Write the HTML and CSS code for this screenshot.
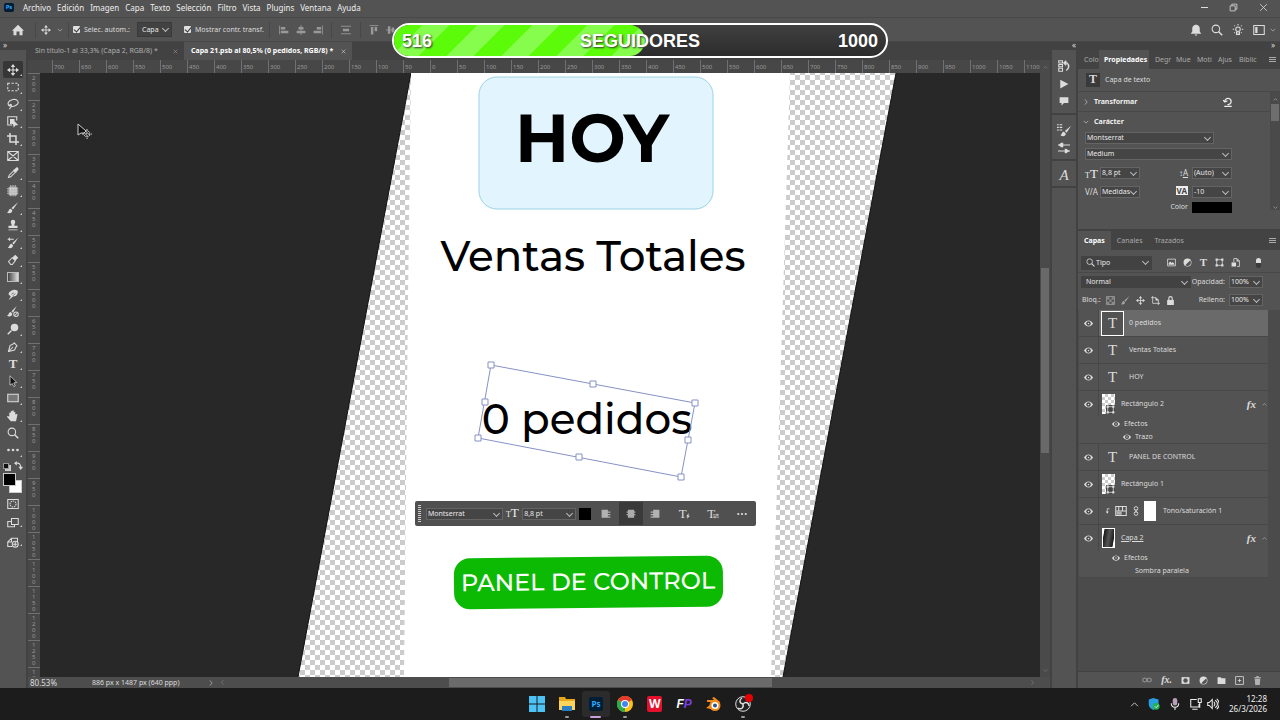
FILE: index.html
```
<!DOCTYPE html>
<html lang="es">
<head>
  <meta charset="UTF-8">
  <meta name="viewport" content="width=device-width, initial-scale=1.0">
  <title>Capa 21.psb</title>
  <link rel="stylesheet" href="styles.css">
</head>
<body>
  <!-- Iconos -->
  <svg class="defs" aria-hidden="true">
    <symbol id="down" viewBox="0 0 16 16"><path d="M2 5l6 6 6-6" class="l"/></symbol>
    <symbol id="up" viewBox="0 0 16 16"><path d="M2 11l6-6 6 6" class="l"/></symbol>
    <symbol id="right" viewBox="0 0 16 16"><path d="M5 1l6 7-6 7" class="l"/></symbol>
    <symbol id="left" viewBox="0 0 16 16"><path d="M11 1L5 8l6 7" class="l"/></symbol>
    <symbol id="close" viewBox="0 0 16 16"><path d="M2 2l12 12M14 2L2 14" class="l"/></symbol>
    <symbol id="home" viewBox="0 0 16 16"><path d="M8 1L0 9h2v6h4v-5h4v5h4V9h2z" class="f"/></symbol>
    <symbol id="move" viewBox="0 0 16 16"><path d="M8 2v12M2 8h12" class="l"/><path d="M8 0l3 4H5zM8 16l3-4H5zM0 8l4-3v6zM16 8l-4-3v6z" class="f"/></symbol>
    <symbol id="marquee" viewBox="0 0 16 16"><path d="M1 3h14v10H1z" class="l" stroke-dasharray="3 2"/></symbol>
    <symbol id="lasso" viewBox="0 0 16 16"><path d="M4 11C-1 8 2 3 8 2s9 4 5 7-8 3-9 1 2-2 2 0-1 3-3 5" class="l"/></symbol>
    <symbol id="object" viewBox="0 0 16 16"><path d="M7 12H1V1h12v5" class="l"/><path d="M4 4h6v3l5 5-4 .5-2 3-1-5H4z" class="f"/></symbol>
    <symbol id="crop" viewBox="0 0 16 16"><path d="M4 0v12h12M0 4h12v12" class="l t2"/></symbol>
    <symbol id="frame" viewBox="0 0 16 16"><path d="M1 2h14v12H1zM1 2l14 12M15 2L1 14" class="l"/></symbol>
    <symbol id="dropper" viewBox="0 0 16 16"><path d="M2 14l1-3 6-6 2 2-6 6z" class="l"/><path d="M8 4l2-1 2-2c2-2 4 1 3 3l-2 2-1 2z" class="f"/></symbol>
    <symbol id="patch" viewBox="0 0 16 16"><rect x="2" y="2" width="12" height="12" rx="2" class="g"/><path d="M5 0v16M8 0v16M11 0v16M0 5h16M0 8h16M0 11h16" class="l" stroke-dasharray="1 1"/></symbol>
    <symbol id="brush" viewBox="0 0 16 16"><path d="M15 0L6 8l2 2zM5 9c-3 0-2 4-5 5 3 2 7 1 7-3z" class="f"/></symbol>
    <symbol id="stamp" viewBox="0 0 16 16"><path d="M6 9c1-2-1-3-1-5a3 3 0 0 1 6 0c0 2-2 3-1 5h4v3H2V9zM2 14h12v1H2z" class="f"/></symbol>
    <symbol id="history" viewBox="0 0 16 16"><path d="M15 1L7 8l2 2zM6 9c-3 0-2 4-5 5 3 2 7 1 7-3z" class="f"/><path d="M9 3H2l2-2M2 3l2 2" class="l"/></symbol>
    <symbol id="eraser" viewBox="0 0 16 16"><path d="M7 5l4-4 4 4-4 4z" class="f"/><path d="M7 5l-5 5 3 4h2l4-5z" class="l"/></symbol>
    <symbol id="smudge" viewBox="0 0 16 16"><path d="M2 15l3-5-3-3c0-3 5-6 8-6l4 1c1 3 0 8-6 8z" class="f"/><path d="M6 7l3-2M8 9l3-3" class="d"/></symbol>
    <symbol id="mixer" viewBox="0 0 16 16"><path d="M13 0L6 7l2 2zM5 8c-3 0-2 4-5 5 3 2 7 1 7-3z" class="f"/><circle cx="12" cy="11" r="3" class="l"/><path d="M10 13l4-4" class="l"/></symbol>
    <symbol id="dodge" viewBox="0 0 16 16"><circle cx="10" cy="6" r="5" class="f"/><path d="M6 10l-5 5" class="l t2"/></symbol>
    <symbol id="pen" viewBox="0 0 16 16"><path d="M2 14l2-8 6-3 3 3-3 6zM2 14l6-6M9 2l5 5" class="l"/></symbol>
    <symbol id="arrow" viewBox="0 0 16 16"><path d="M4 1l9 9-4 .5 2 4-2 1-2-4-3 2z" fill="#111" stroke="#ddd"/></symbol>
    <symbol id="rect" viewBox="0 0 16 16"><path d="M1 3h14v10H1z" fill="#777"/><path d="M1 3h14v10H1z" class="l"/></symbol>
    <symbol id="hand" viewBox="0 0 16 16"><path d="M5 15L0 9c0-1 1-2 3 0V4c0-1 2-1 2 0V2c0-1 2-1 2 0V1c0-1 2-1 2 0v2c1-1 2-1 2 0v3c1-1 3-1 3 0l-2 9z" class="f"/></symbol>
    <symbol id="zoom" viewBox="0 0 16 16"><circle cx="6.500" cy="6.500" r="5" class="l"/><path d="M10 10l5 5" class="l t2"/></symbol>
    <symbol id="dots" viewBox="0 0 16 16"><circle cx="2" cy="8" r="1.800" class="f"/><circle cx="8" cy="8" r="1.800" class="f"/><circle cx="14" cy="8" r="1.800" class="f"/></symbol>
    <symbol id="swap" viewBox="0 0 16 16"><path d="M4 4c6-1 8 2 8 8" class="l t2"/><path d="M5 0v8L0 4zM8 10h8l-4 6z" class="f"/></symbol>
    <symbol id="mask" viewBox="0 0 16 16"><path d="M1 2h14v12H1z" class="l"/><circle cx="8" cy="8" r="4" class="l" stroke-dasharray="2 1"/></symbol>
    <symbol id="screens" viewBox="0 0 16 16"><path d="M6 2h9v8H6z" class="l"/><path d="M6 6H1v7h9v-3" class="l"/></symbol>
    <symbol id="cloud" viewBox="0 0 16 16"><path d="M7 14H1V8l5-5h8v5M1 8h5V3" class="l"/><circle cx="11" cy="11" r="4" class="l"/><path d="M8 11h6M11 8v6" class="l"/></symbol>
    <symbol id="al" viewBox="0 0 16 16"><path d="M1 1v14" class="l"/><path d="M3 3h7v4H3zM3 9h12v4H3z" class="f"/></symbol>
    <symbol id="ac" viewBox="0 0 16 16"><path d="M8 0v16" class="l"/><path d="M4 3h8v4H4zM1 9h14v4H1z" class="f"/></symbol>
    <symbol id="ar" viewBox="0 0 16 16"><path d="M15 1v14" class="l"/><path d="M6 3h7v4H6zM1 9h12v4H1z" class="f"/></symbol>
    <symbol id="dist" viewBox="0 0 16 16"><path d="M0 2h16M0 14h16" class="l"/><path d="M3 6h10v4H3z" class="f"/></symbol>
    <symbol id="at" viewBox="0 0 16 16"><path d="M1 1h14" class="l"/><path d="M3 3h4v12H3zM9 3h4v7H9z" class="f"/></symbol>
    <symbol id="am" viewBox="0 0 16 16"><path d="M0 8h16" class="l"/><path d="M3 2h4v12H3zM9 4h4v8H9z" class="f"/></symbol>
    <symbol id="bell" viewBox="0 0 16 16"><path d="M1 13l2-3V6c0-3 2-4 4-5h2c2 1 4 2 4 5v4l2 3zM6 14h4l-2 2z" class="f"/></symbol>
    <symbol id="bulb" viewBox="0 0 16 16"><circle cx="8" cy="7" r="3" class="l"/><path d="M6 10v4h4v-4M6 12h4M8 0v2M1 7h2M13 7h2M3 2l1 1M13 2l-1 1M3 12l1-1M13 12l-1-1" class="l"/></symbol>
    <symbol id="work" viewBox="0 0 16 16"><path d="M1 2h14v12H1z" class="l"/><path d="M3 4h3v8H3z" class="f"/></symbol>
    <symbol id="restore" viewBox="0 0 16 16"><path d="M2 5h9v9H2zM5 5V2h9v9h-3" class="l"/></symbol>
    <symbol id="tl" viewBox="0 0 16 16"><path d="M1 1h10v3h4v2h-4v2h4v2h-4v2h4v2H1z" class="g"/></symbol>
    <symbol id="tc" viewBox="0 0 16 16"><path d="M3 1h10v3h2v2h-2v2h2v2h-2v4H3v-4H1V8h2V6H1V4h2z" class="g"/></symbol>
    <symbol id="tr" viewBox="0 0 16 16"><path d="M15 1H5v3H1v2h4v2H1v2h4v2H1v2h14z" class="g"/></symbol>
    <symbol id="hist2" viewBox="0 0 16 16"><path d="M1 1h5v3H1zM1 6h5v3H1zM1 11h5v4H1z" class="l"/><path d="M9 4h3c4 3 2 8-1 10M11 1L8 4l3 3" class="l t2"/></symbol>
    <symbol id="play" viewBox="0 0 16 16"><path d="M2 1l13 7-13 7z" class="f"/></symbol>
    <symbol id="note" viewBox="0 0 16 16"><path d="M1 2h14v9H8l-4 4v-4H1z" class="f"/></symbol>
    <symbol id="brushes" viewBox="0 0 16 16"><path d="M16 3l-7 6 2 2zM8 10c-3 0-2 3-4 4 3 2 6 1 6-2z" class="f"/><path d="M0 2h2m1 0h3M0 5h2m1 0h3M0 8h2m1 0h3" class="l"/></symbol>
    <symbol id="sliders" viewBox="0 0 16 16"><path d="M0 4h16M0 12h16" class="l"/><path d="M1 4l3-3h3v6H4zM15 12l-4-3H9v6h2z" class="f"/></symbol>
    <symbol id="reset" viewBox="0 0 16 16"><path d="M3 7a5 5 0 1 1 4 5M0 5l3 3 4-2M2 15h12" class="l t2"/></symbol>
    <symbol id="image" viewBox="0 0 16 16"><path d="M1 2h14v12H1z" class="l"/><path d="M3 12V9l3-3 2 3 2-2 3 3v2z" class="f"/></symbol>
    <symbol id="adjust" viewBox="0 0 16 16"><circle cx="8" cy="8" r="7" class="f"/><path d="M13 4L4 13c5 3 10 0 10-5z" fill="#535353"/></symbol>
    <symbol id="shape" viewBox="0 0 16 16"><path d="M3 3h10v10H3z" class="l"/><path d="M1 1h4v4H1zM11 1h4v4h-4zM1 11h4v4H1zM11 11h4v4h-4z" class="f"/></symbol>
    <symbol id="smart" viewBox="0 0 16 16"><path d="M5 8V1h6l4 4v10h-4" class="l"/><path d="M1 8h8v7H1zM10 1v5h5z" class="f"/></symbol>
    <symbol id="grid" viewBox="0 0 16 16"><path d="M1 1h14v14H1z" class="l"/><path d="M2 2h4v4H2zM10 2h4v4h-4zM6 6h4v4H6zM2 10h4v4H2zM10 10h4v4h-4z" class="g"/></symbol>
    <symbol id="artb" viewBox="0 0 16 16"><path d="M3 0v13h13M0 3h9l4 4v9" class="l"/><path d="M8 2v6h6z" class="f"/></symbol>
    <symbol id="lock" viewBox="0 0 16 16"><path d="M2 7h12v9H2z" class="f"/><path d="M5 7V4a3 3 0 0 1 6 0v3" class="l t2"/></symbol>
    <symbol id="eye" viewBox="0 0 16 16"><path d="M0 8c4-7 12-7 16 0-4 7-12 7-16 0z" class="f"/><circle cx="8" cy="8" r="4" fill="#444"/><circle cx="8" cy="8" r="1.500" class="f"/></symbol>
    <symbol id="clip" viewBox="0 0 16 16"><path d="M12 2H6v9" class="l t2"/><path d="M2 9h8l-4 6z" class="f"/></symbol>
    <symbol id="hue" viewBox="0 0 16 16"><path d="M1 2h14v12H1zM1 8h14M5 2v6M10 2v6" class="l"/><path d="M2 9h7v4H2z" class="g"/></symbol>
    <symbol id="chain" viewBox="0 0 16 16"><rect x="5" y="1" width="6" height="6" rx="3" class="l"/><rect x="5" y="9" width="6" height="6" rx="3" class="l"/><path d="M8 5v6" class="l"/></symbol>
    <symbol id="link" viewBox="0 0 16 16"><rect x="1" y="5" width="7" height="6" rx="3" class="l"/><rect x="8" y="5" width="7" height="6" rx="3" class="l"/></symbol>
    <symbol id="addmask" viewBox="0 0 16 16"><path d="M1 2h14v12H1z" class="f"/><circle cx="8" cy="8" r="4" fill="#535353"/></symbol>
    <symbol id="folder" viewBox="0 0 16 16"><path d="M1 2h6l1 2h7v10H1z" class="f"/></symbol>
    <symbol id="plus" viewBox="0 0 16 16"><path d="M1 1h14v14H1zM8 5v6M5 8h6" class="l"/></symbol>
    <symbol id="trash" viewBox="0 0 16 16"><path d="M3 5h10l-1 11H4zM2 2h4V0h4v2h4v2H2z" class="g"/></symbol>
    <symbol id="bolt" viewBox="0 0 16 16"><path d="M10 0L3 9h4l-2 7 8-9H9z" class="f"/></symbol>
    <symbol id="tune" viewBox="0 0 16 16"><path d="M0 5h16M0 11h16M11 2v6M5 8v6" class="l t2"/></symbol>
  </svg>

  <header class="menubar">
    <span class="ps-logo">Ps</span>
    <nav>
      <button>Archivo</button><button>Edición</button><button>Imagen</button><button>Capa</button><button>Texto</button><button>Selección</button><button>Filtro</button><button>Vista</button><button>Plugins</button><button>Ventana</button><button>Ayuda</button>
    </nav>
    <div class="window-buttons">
      <button aria-label="Minimizar"><span class="minus"></span></button>
      <button aria-label="Restaurar"><svg class="i8"><use href="#restore"/></svg></button>
      <button aria-label="Cerrar"><svg class="i8"><use href="#close"/></svg></button>
    </div>
  </header>

  <div class="options">
    <button class="home" aria-label="Inicio"><svg class="i12"><use href="#home"/></svg></button>
    <button class="current" aria-label="Mover"><svg class="i10"><use href="#move"/></svg><svg class="i6"><use href="#down"/></svg></button>
    <label class="check first"><input type="checkbox" checked>Selec. autom.:</label>
    <span class="field capa"><select aria-label="Selección automática"><option>Capa</option></select></span>
    <label class="check second"><input type="checkbox" checked>Mostrar contr. transf.</label>
    <div class="aligns">
      <svg class="i10"><use href="#al"/></svg><svg class="i10"><use href="#ac"/></svg><svg class="i10"><use href="#ar"/></svg>
    </div>
    <div class="aligns one"><svg class="i10"><use href="#dist"/></svg></div>
    <div class="aligns last"><svg class="i10"><use href="#at"/></svg><svg class="i10"><use href="#am"/></svg></div>
    <div class="right-tools">
      <button aria-label="Avisos"><svg class="i12"><use href="#bell"/></svg></button>
      <button aria-label="Buscar"><svg class="i12"><use href="#zoom"/></svg></button>
      <button aria-label="Sugerencias"><svg class="i12"><use href="#bulb"/></svg></button>
      <button class="space" aria-label="Espacio de trabajo"><svg class="i12"><use href="#work"/></svg><svg class="i6"><use href="#down"/></svg></button>
    </div>
  </div>

  <main>
    <aside class="toolbar">
      <div class="strip">»</div>
      <div class="tools">
        <button class="on" aria-label="Mover"><svg><use href="#move"/></svg></button>
        <button aria-label="Marco"><svg><use href="#marquee"/></svg></button>
        <button aria-label="Lazo"><svg><use href="#lasso"/></svg></button>
        <button aria-label="Selección de objetos"><svg><use href="#object"/></svg></button>
        <button aria-label="Recortar"><svg><use href="#crop"/></svg></button>
        <button class="solo" aria-label="Marco de imagen"><svg><use href="#frame"/></svg></button>
        <button aria-label="Cuentagotas"><svg><use href="#dropper"/></svg></button>
        <button aria-label="Parche"><svg><use href="#patch"/></svg></button>
        <button aria-label="Pincel"><svg><use href="#brush"/></svg></button>
        <button aria-label="Tampón"><svg><use href="#stamp"/></svg></button>
        <button aria-label="Pincel de historia"><svg><use href="#history"/></svg></button>
        <button aria-label="Borrador"><svg><use href="#eraser"/></svg></button>
        <button aria-label="Degradado"><span class="gradient"></span></button>
        <button aria-label="Dedo"><svg><use href="#smudge"/></svg></button>
        <button class="solo" aria-label="Pincel mezclador"><svg><use href="#mixer"/></svg></button>
        <button aria-label="Sobreexponer"><svg><use href="#dodge"/></svg></button>
        <button aria-label="Pluma"><svg><use href="#pen"/></svg></button>
        <button aria-label="Texto"><span class="t">T</span></button>
        <button aria-label="Selección de trazado"><svg><use href="#arrow"/></svg></button>
        <button aria-label="Rectángulo"><svg><use href="#rect"/></svg></button>
        <button aria-label="Mano"><svg><use href="#hand"/></svg></button>
        <button class="solo" aria-label="Zoom"><svg><use href="#zoom"/></svg></button>
        <button aria-label="Más"><svg><use href="#dots"/></svg></button>
      </div>
      <div class="mini"><span class="default-colors"></span><svg class="i8"><use href="#swap"/></svg></div>
      <div class="colors"><span class="bg"></span><span class="fg"></span></div>
      <div class="bottom-tools">
        <button class="solo" aria-label="Máscara rápida"><svg><use href="#mask"/></svg></button>
        <button aria-label="Modo de pantalla"><svg><use href="#screens"/></svg></button>
        <button aria-label="Compartir"><svg><use href="#cloud"/></svg></button>
      </div>
    </aside>

    <section class="document">
      <div class="doc-tabs">
        <button class="first">Sin título-1 al 33,3% (Capa 2, RGB/8) *<svg class="i5"><use href="#close"/></svg></button>
        <button class="active">Capa 21.psb al 80,5% (0 pedidos, RGB/8) *<svg class="i5"><use href="#close"/></svg></button>
      </div>
      <div class="work">
        <div class="ruler-h" id="rulerH"></div>
        <div class="ruler-v" id="rulerV"></div>
        <div class="canvas">
          <svg class="art" viewBox="40 73 1000 604" preserveAspectRatio="xMidYMid slice">
            <defs>
              <pattern id="checker" width="10" height="10" patternUnits="userSpaceOnUse">
                <rect width="10" height="10" fill="#fff"/><path d="M0 0h5v5H0zM5 5h5v5H5z" fill="#ccc"/>
              </pattern>
            </defs>
            <path d="M411 73H896L783 677H298z" fill="url(#checker)"/>
            <path d="M411 73L298 677M896 73L783 677" stroke="#111"/>
            <path d="M411 73H790L771 677H404L408 300z" fill="#fff"/>
            <rect x="479" y="77" width="234" height="132" rx="18" fill="#e2f4fd" stroke="#9bd4e4"/>
            <text x="592" y="162" class="hoy">HOY</text>
            <text x="593" y="271" class="ventas">Ventas Totales</text>
            <text x="587" y="434" class="pedidos">0 pedidos</text>
            <g class="box">
              <path d="M491 365L695 403L681 477L478 438z"/>
              <path d="M488 362h6v6h-6zM692 400h6v6h-6zM678 474h6v6h-6zM475 435h6v6h-6zM590 381h6v6h-6zM685 437h6v6h-6zM576 454h6v6h-6zM482 399h6v6h-6z" fill="#fff"/>
            </g>
            <g transform="rotate(-0.6 588 582)">
              <rect x="454" y="557" width="269" height="51" rx="16" fill="#0cba04"/>
              <text x="588" y="590" class="panel-text">PANEL DE CONTROL</text>
            </g>
            <path d="M78 124v11l3-2 3 0 2-2z" fill="#111" stroke="#ccc"/>
            <path d="M87 129v10M82 134h10" stroke="#ccc" stroke-dasharray="2 1"/>
            <circle cx="87" cy="134" r="3" fill="none" stroke="#ccc" stroke-dasharray="2 1"/>
          </svg>
          <div class="context-bar">
            <span class="grip"></span>
            <span class="field font"><select aria-label="Fuente"><option>Montserrat</option></select></span>
            <span class="tt"><small>T</small>T</span>
            <span class="field size"><input type="text" value="8,8 pt" aria-label="Tamaño"></span>
            <span class="swatch"></span>
            <button aria-label="Izquierda"><svg class="i10"><use href="#tl"/></svg></button>
            <button class="on" aria-label="Centro"><svg class="i10"><use href="#tc"/></svg></button>
            <button aria-label="Derecha"><svg class="i10"><use href="#tr"/></svg></button>
            <button class="wide" aria-label="Texto dinámico"><span class="t">T</span><svg class="i6"><use href="#bolt"/></svg></button>
            <button class="wide" aria-label="Opciones de texto"><span class="t">T</span><svg class="i6"><use href="#tune"/></svg></button>
            <button class="wide" aria-label="Más opciones"><svg class="i10"><use href="#dots"/></svg></button>
          </div>
        </div>
        <div class="scroll-v"><svg class="i5"><use href="#up"/></svg><span class="thumb"></span><svg class="i5"><use href="#down"/></svg></div>
      </div>
      <footer class="status">
        <span class="zoom">80.53%</span>
        <span class="dims">886 px x 1487 px (640 ppp)</span>
        <svg class="i6"><use href="#right"/></svg>
        <div class="scroll-h"><svg class="i5"><use href="#left"/></svg><span class="thumb"></span><svg class="i5"><use href="#right"/></svg></div>
      </footer>
    </section>

    <aside class="dock">
      <div class="strip">«</div>
      <div class="group three">
        <button aria-label="Historia"><svg class="i12"><use href="#hist2"/></svg></button>
        <button aria-label="Acciones"><svg class="i10"><use href="#play"/></svg></button>
        <button aria-label="Comentarios"><svg class="i10"><use href="#note"/></svg></button>
      </div>
      <div class="group two">
        <button aria-label="Pinceles"><svg class="i14"><use href="#brushes"/></svg></button>
        <button aria-label="Ajustes de pincel"><svg class="i12"><use href="#sliders"/></svg></button>
      </div>
      <div class="group"><button aria-label="Glifos"><span class="glyph-a">A</span></button></div>
      <div class="rest"></div>
    </aside>

    <aside class="panels">
      <div class="strip">»</div>
      <section class="properties">
        <div class="panel-tabs narrow">
          <button>Colo</button><button class="active">Propiedades</button><button>Degr</button><button>Mue</button><button>Moti</button><button>Ajus</button><button>Biblic</button>
          <span class="burger"></span>
        </div>
        <div class="kind"><span class="t box">T</span>Capa de texto</div>
        <div class="props">
          <div class="prop-body">
            <div class="fold line"><svg class="i6"><use href="#right"/></svg><b>Transformar</b><svg class="i10 reset"><use href="#reset"/></svg></div>
            <div class="fold"><svg class="i6"><use href="#down"/></svg><b>Carácter</b></div>
            <div class="chars">
              <span class="field short"><select aria-label="Familia"><option>Montserrat</option></select></span>
              <span class="field"><select aria-label="Estilo"><option>Medium</option></select></span>
              <div class="pair">
                <span class="tt"><small>T</small>T</span><span class="field"><input type="text" value="8,8 pt" aria-label="Cuerpo"></span>
                <span class="sym lead">↕<u>A</u></span><span class="field"><input type="text" value="(Auto)" aria-label="Interlineado"></span>
                <span class="sym">V/A</span><span class="field"><input type="text" value="Medidas" aria-label="Kerning"></span>
                <span class="sym inv">VA</span><span class="field"><input type="text" value="-10" aria-label="Tracking"></span>
                <span class="color-label">Color</span><span class="color"></span>
              </div>
            </div>
          </div>
          <div class="prop-scroll"><svg class="i5"><use href="#up"/></svg><span class="thumb"></span><svg class="i5"><use href="#down"/></svg></div>
        </div>
      </section>

      <section class="layers">
        <div class="panel-tabs">
          <button class="active">Capas</button><button>Canales</button><button>Trazados</button>
          <span class="burger"></span>
        </div>
        <div class="bar filter">
          <span class="field tipo"><svg class="i8"><use href="#zoom"/></svg><select aria-label="Filtro"><option>Tipo</option></select></span>
          <div class="icons"><svg class="i8"><use href="#image"/></svg><svg class="i8"><use href="#adjust"/></svg><span class="t">T</span><svg class="i8"><use href="#shape"/></svg><svg class="i8"><use href="#smart"/></svg></div>
          <span class="toggle"></span>
        </div>
        <div class="bar">
          <span class="field mode"><select aria-label="Modo de fusión"><option>Normal</option></select></span>
          <label>Opacidad:<span class="field pct"><input type="text" value="100%"></span></label>
        </div>
        <div class="bar">
          <span class="bloq">Bloq.:</span>
          <div class="icons lock"><svg class="i8 dim"><use href="#grid"/></svg><svg class="i8 dim"><use href="#brush"/></svg><svg class="i8"><use href="#move"/></svg><svg class="i8"><use href="#artb"/></svg><svg class="i8"><use href="#lock"/></svg></div>
          <label>Relleno:<span class="field pct"><input type="text" value="100%"></span></label>
        </div>
        <div class="list">
          <ul>
            <li><div class="row"><svg class="eye"><use href="#eye"/></svg><div class="cell sel"><span class="t tbox">T</span>0 pedidos</div></div></li>
            <li><div class="row"><svg class="eye"><use href="#eye"/></svg><div class="cell"><span class="t tbox">T</span>Ventas Totales</div></div></li>
            <li><div class="row"><svg class="eye"><use href="#eye"/></svg><div class="cell"><span class="t tbox">T</span>HOY</div></div></li>
            <li>
              <div class="row"><svg class="eye"><use href="#eye"/></svg><div class="cell"><span class="thumbnail"><svg class="i8"><use href="#shape"/></svg></span>Rectángulo 2<i>fx</i><svg class="i5"><use href="#up"/></svg></div></div>
              <div class="effect"><svg><use href="#eye"/></svg>Efectos</div>
              <div class="effect deep"><svg><use href="#eye"/></svg>Trazo</div>
            </li>
            <li><div class="row"><svg class="eye"><use href="#eye"/></svg><div class="cell"><span class="t tbox">T</span>PANEL DE CONTROL</div></div></li>
            <li><div class="row"><svg class="eye"><use href="#eye"/></svg><div class="cell"><span class="thumbnail"><svg class="i8"><use href="#shape"/></svg></span>Rectángulo 1</div></div></li>
            <li><div class="row"><svg class="eye"><use href="#eye"/></svg><div class="cell hue"><svg class="i6"><use href="#clip"/></svg><svg class="i12"><use href="#hue"/></svg><svg class="i10"><use href="#chain"/></svg><span class="white"></span>Tono/saturación 1</div></div></li>
            <li>
              <div class="row"><svg class="eye"><use href="#eye"/></svg><div class="cell"><span class="thumbnail photo"></span><u>Capa 2</u><i>fx</i><svg class="i5"><use href="#up"/></svg></div></div>
              <div class="effect"><svg><use href="#eye"/></svg>Efectos</div>
              <div class="effect deep"><span class="no-eye"></span>Sombra paralela</div>
            </li>
          </ul>
        </div>
        <div class="layer-actions">
          <svg class="i10 dim"><use href="#link"/></svg><i>fx.</i><svg class="i8"><use href="#addmask"/></svg><svg class="i8"><use href="#adjust"/></svg><svg class="i8"><use href="#folder"/></svg><svg class="i8"><use href="#plus"/></svg><svg class="i8"><use href="#trash"/></svg>
        </div>
      </section>
    </aside>
  </main>

  <footer class="taskbar">
    <div class="apps">
      <button aria-label="Inicio"><svg viewBox="0 0 16 16"><path d="M0 0h7.500v7.500H0zM8.500 0H16v7.500H8.500zM0 8.500h7.500V16H0zM8.500 8.500H16V16H8.500z" fill="#4cc2f5"/></svg></button>
      <button class="open" aria-label="Explorador"><svg viewBox="0 0 16 16"><path d="M0 1h6l1 2h9v11H0z" fill="#e9a81c"/><path d="M0 5h16v9H0z" fill="#fbd45c"/><path d="M3 10h10v5H3z" fill="#2a7fc4"/></svg></button>
      <button class="current-app" aria-label="Photoshop"><span class="ps-logo">Ps</span></button>
      <button class="open" aria-label="Chrome"><svg viewBox="0 0 16 16"><circle cx="8" cy="8" r="8" fill="#fbc116"/><path d="M8 8L1 4a8 8 0 0 1 14 0z" fill="#e33b2e"/><path d="M8 8v8A8 8 0 0 1 1 4z" fill="#2da94f"/><circle cx="8" cy="8" r="4" fill="#fff"/><circle cx="8" cy="8" r="3" fill="#4285f4"/></svg></button>
      <button aria-label="WPS"><span class="wps">W</span></button>
      <button aria-label="FP"><span class="fp">F<b>P</b></span></button>
      <button aria-label="Blender"><svg viewBox="0 0 16 16"><path d="M1 12l8-6H2V4h7L7 2l2-1 6 5-5 8z" fill="#f08a1c"/><circle cx="10" cy="9.500" r="5.500" fill="#f08a1c"/><circle cx="10" cy="9.500" r="3.500" fill="#fff"/><circle cx="10" cy="9.500" r="2" fill="#265787"/></svg></button>
      <button class="open" aria-label="OBS"><svg viewBox="0 0 16 16"><circle cx="8" cy="8" r="7.300" fill="#222" stroke="#ddd"/><path d="M8 8C4 7 4 4 7 2M8 8c3-3 6-1 6 2M8 8c1 4-2 6-5 4" fill="none" stroke="#ddd" stroke-width="1.500"/></svg><span class="rec"></span></button>
    </div>
    <div class="tray">
      <svg class="i8"><use href="#up"/></svg>
      <svg class="i12" viewBox="0 0 16 16"><path d="M7 0l7 2v6c0 4-3 6-7 8-4-2-6-4-6-8V2z" fill="#2a9fe0"/><circle cx="11" cy="11" r="4.500" fill="#22b14c"/><path d="M9 11l2 2 3-4" fill="none" stroke="#fff"/></svg>
      <svg class="i12" viewBox="0 0 16 16"><rect x="5" y="0" width="6" height="10" rx="3" fill="#b9a0b9"/><path d="M3 7c0 7 10 7 10 0M8 12v4" class="l"/></svg>
      <svg class="i12 net" viewBox="0 0 16 16"><path d="M9 2H1v10h11V8M3 15h7M11 1h4v5h-4zM13 6v7" class="l"/></svg>
      <svg class="i12" viewBox="0 0 16 16"><path d="M1 6h2l4-4v12l-4-4H1zM9 5c2 2 2 4 0 6M11 3c4 3 4 7 0 10M13 1c5 5 5 9 0 14" class="l"/></svg>
      <div class="clock"><time>12:28</time><time>26/3/2026</time></div>
    </div>
  </footer>

  <div class="goal">
    <div class="goal-fill" style="width: 51%"></div>
    <span>516</span><span>SEGUIDORES</span><span>1000</span>
  </div>

  <script>
    // Reglas del documento: una marca cada 50 px
    function fillRuler(id, from, to) {
      const ruler = document.getElementById(id);
      for (let n = from; n <= to; n += 50) {
        const mark = document.createElement('span');
        mark.textContent = Math.abs(n);
        ruler.appendChild(mark);
      }
    }
    fillRuler('rulerH', -700, 1100);
    fillRuler('rulerV', 200, 1300);
  </script>
</body>
</html>
```
FILE: styles.css
```
* {
  box-sizing: border-box;
}
body {
  margin: 0;
  height: 100vh;
  display: flex;
  flex-direction: column;
  overflow: hidden;
  background: #424242;
  color: #dcdcdc;
  font-family: 'Noto Sans', 'Open Sans', sans-serif;
  font-size: 7px;
  line-height: 10px;
}
button {
  display: flex;
  align-items: center;
  justify-content: center;
  padding: 0;
  border: 0;
  background: none;
  color: inherit;
  font: inherit;
  white-space: nowrap;
}
svg {
  display: block;
  flex: none;
}
.defs {
  position: absolute;
  width: 0;
  height: 0;
}
.l { fill: none; stroke: currentColor; stroke-width: 1.4; }
.l.t2 { stroke-width: 2; }
.f { fill: currentColor; }
.g { fill: currentColor; opacity: .7; }
.d { fill: none; stroke: #535353; }
.i5 { width: 5px; height: 5px; }
.i6 { width: 6px; height: 6px; }
.i8 { width: 9px; height: 9px; }
.i10 { width: 10px; height: 10px; }
.i12 { width: 12px; height: 12px; }
.i14 { width: 14px; height: 14px; }
.dim { opacity: .6; }
.t {
  font-family: 'Liberation Serif', serif;
  font-weight: bold;
  font-size: 13px;
  line-height: 13px;
}

/* Campos */
.field {
  position: relative;
  display: flex;
  align-items: center;
  height: 12px;
  background: #454545;
  border: 1px solid #646464;
}
.field::after {
  content: '';
  position: absolute;
  right: 3px;
  top: 2px;
  width: 4px;
  height: 4px;
  border: solid #bbb;
  border-width: 0 1px 1px 0;
  transform: rotate(45deg);
  pointer-events: none;
}
.field select, .field input {
  appearance: none;
  width: 100%;
  height: 10px;
  min-width: 0;
  margin: 0;
  padding: 0 10px 0 1px;
  border: 0;
  background: none;
  color: #e8e8e8;
  font: inherit;
}
.field input {
  padding-right: 0;
}

/* Barra de menús */
.menubar {
  display: flex;
  align-items: center;
  height: 18px;
  padding: 0 10px 2px 4px;
  background: #535353;
  border-bottom: 1px solid #484848;
}
.ps-logo {
  width: 10px;
  height: 9px;
  border-radius: 2px;
  background: #001e36;
  color: #31a8ff;
  font-size: 6px;
  font-weight: bold;
  line-height: 9px;
  text-align: center;
}
.menubar nav {
  display: flex;
  gap: 6px;
  margin-left: 9px;
  color: #eee;
  font-size: 8px;
}
.window-buttons {
  display: flex;
  gap: 21px;
  margin-left: auto;
  padding-right: 2px;
}
.minus {
  width: 7px;
  height: 1px;
  background: #ddd;
}

/* Barra de opciones */
.options {
  display: flex;
  align-items: center;
  height: 24px;
  background: #535353;
  border-bottom: 1px solid #484848;
}
.options .home {
  width: 36px;
  height: 16px;
  border-right: 1px solid #484848;
}
.options .current {
  gap: 6px;
  width: 33px;
  height: 16px;
  border-right: 1px solid #484848;
}
.check {
  display: flex;
  align-items: center;
  gap: 4px;
  white-space: nowrap;
}
.check input {
  appearance: none;
  width: 7px;
  height: 7px;
  margin: 0;
  border-radius: 1px;
  background: #e0e0e0;
}
.check input:checked::after {
  content: '';
  display: block;
  width: 3px;
  height: 5px;
  margin-left: 2px;
  border: solid #333;
  border-width: 0 1px 1px 0;
  transform: rotate(40deg);
}
.check.first {
  width: 68px;
  padding-left: 4px;
}
.field.capa {
  width: 35px;
  height: 15px;
  padding-left: 3px;
  background: #424242;
  border-color: #3a3a3a;
}
.field.capa::after {
  top: 3px;
}
.check.second {
  width: 97px;
  padding-left: 12px;
}
.aligns {
  display: flex;
  align-items: center;
  gap: 7px;
  height: 16px;
  padding: 0 8px 0 9px;
  border-left: 1px solid #484848;
  color: #999;
}
.aligns.one {
  padding: 0 9px;
}
.aligns.last {
  padding-left: 8px;
}
.right-tools {
  display: flex;
  align-items: center;
  gap: 9px;
  margin-left: auto;
  padding-right: 4px;
}
.right-tools .space {
  gap: 5px;
}

main {
  flex: 1;
  min-height: 0;
  display: flex;
}
.strip {
  height: 8px;
  color: #ddd;
  font-size: 8px;
  line-height: 6px;
  text-align: right;
}

/* Herramientas */
.toolbar {
  width: 26px;
  display: flex;
  flex-direction: column;
  background: #535353;
}
.toolbar .strip {
  padding-left: 3px;
  background: #424242;
  text-align: left;
}
.tools {
  display: grid;
  grid-template-rows: repeat(23, 1fr);
  height: 398px;
  margin: 11px 3px 0;
}
.tools button, .bottom-tools button {
  position: relative;
  border-radius: 2px;
}
.tools svg, .bottom-tools svg {
  width: 12px;
  height: 12px;
}
.tools button::after, .bottom-tools button::after {
  content: '';
  position: absolute;
  right: 1px;
  bottom: 2px;
  border: 1px solid #ccc;
  border-color: transparent #ccc #ccc transparent;
}
.tools .solo::after, .bottom-tools .solo::after {
  display: none;
}
.tools .on {
  background: #363636;
}
.gradient {
  width: 12px;
  height: 10px;
  border: 1px solid #bbb;
  background: linear-gradient(90deg, #444, #ddd);
}
.mini {
  display: flex;
  justify-content: space-between;
  align-items: center;
  height: 13px;
  padding: 0 3px;
}
.default-colors {
  width: 6px;
  height: 6px;
  background: #111;
  border: 1px solid #999;
  box-shadow: 2px 2px #ccc;
}
.colors {
  position: relative;
  height: 22px;
}
.colors .fg, .colors .bg {
  position: absolute;
  top: 1px;
  left: 3px;
  width: 13px;
  height: 13px;
  background: #000;
  border: 1px solid #ccc;
}
.colors .bg {
  top: 8px;
  left: 9px;
  background: #fff;
}
.bottom-tools {
  display: grid;
  gap: 7px;
  padding: 4px 3px;
}

/* Documento */
.document {
  flex: 1;
  min-width: 0;
  display: flex;
  flex-direction: column;
  margin-left: 2px;
}
.doc-tabs {
  display: flex;
  height: 18px;
  color: #b0b0b0;
}
.doc-tabs button {
  justify-content: space-between;
  width: 168px;
  padding: 0 6px 0 7px;
}
.doc-tabs .first {
  width: 156px;
}
.doc-tabs .active {
  background: #535353;
  color: #fff;
  font-weight: bold;
}
.work {
  flex: 1;
  min-height: 0;
  display: grid;
  grid-template: 13px minmax(0, 1fr) / 12px minmax(0, 1fr) 10px;
}
.ruler-h {
  grid-column: 1 / 3;
  display: flex;
  padding-left: 24px;
  overflow: hidden;
  background: #474747;
  color: #999;
  font-size: 6px;
}
.ruler-h span {
  flex: 0 0 27px;
  padding: 2px 0 0 1px;
  border-left: 1px solid #707070;
}
.ruler-v {
  grid-row: 2;
  overflow: hidden;
  background: #474747;
  color: #999;
  font-size: 6px;
  line-height: 6px;
}
.ruler-v span {
  display: block;
  height: 27px;
  padding: 1px 4px 0;
  border-top: 1px solid #707070;
  word-break: break-all;
}
.canvas {
  position: relative;
  grid-row: 2;
  background: #282828;
  overflow: hidden;
}
.art {
  width: 100%;
  height: 100%;
  font-family: Montserrat, Inter, sans-serif;
}
.art text {
  text-anchor: middle;
}
.hoy { font-size: 67px; font-weight: 700; }
.ventas, .pedidos { font-size: 42px; font-weight: 500; }
.panel-text { font-size: 24px; font-weight: 500; fill: #fff; }
.box { fill: none; stroke: #8791c4; }
.context-bar {
  position: absolute;
  left: 37.5%;
  bottom: 25%;
  display: flex;
  align-items: center;
  width: 341px;
  height: 25px;
  padding-left: 3px;
  border-radius: 2px;
  background: #505050;
}
.grip {
  width: 3px;
  height: 18px;
  margin-right: 5px;
  background: repeating-linear-gradient(#ccc 0 1px, transparent 1px 2px);
}
.field.font { width: 78px; }
.field.size { width: 55px; }
.tt {
  width: 20px;
  color: #eee;
  font: 13px/13px 'Liberation Serif', serif;
  text-align: center;
}
.tt small {
  font-size: 8px;
}
.swatch {
  width: 12px;
  height: 12px;
  margin: 0 3px;
  background: #000;
}
.context-bar button {
  width: 25px;
  height: 23px;
}
.context-bar .on {
  background: #3a3a3a;
}
.context-bar .wide {
  width: 29px;
}
.context-bar .wide:nth-last-child(3) {
  margin-left: 3px;
}
.context-bar .t {
  font-weight: normal;
}
.context-bar .t + svg {
  align-self: end;
  margin: 0 0 6px -2px;
}
.scroll-v {
  grid-column: 3;
  grid-row: 1 / 3;
  display: grid;
  grid-template-rows: 208px 185px 1fr;
  justify-items: center;
  padding-bottom: 4px;
  background: #4a4a4a;
  color: #999;
}
.scroll-v svg:first-child { margin-top: 5px; }
.scroll-v svg:last-child { align-self: end; }
.scroll-v .thumb {
  width: 8px;
  background: #696969;
}
.status {
  display: flex;
  align-items: center;
  height: 11px;
  background: #4d4d4d;
}
.status .zoom {
  width: 64px;
  padding-left: 2px;
  font-size: 8px;
}
.status .dims {
  width: 116px;
}
.scroll-h {
  flex: 1;
  display: grid;
  grid-template-columns: 229px 323px 1fr;
  align-items: center;
  margin: 0 15px 0 6px;
  color: #999;
}
.scroll-h .thumb {
  height: 9px;
  background: #6b6b6b;
}
.scroll-h svg:last-child { justify-self: end; }

/* Acoplador */
.dock {
  width: 28px;
  display: flex;
  flex-direction: column;
  padding: 0 2px;
}
.group, .rest {
  background: #535353;
  border-bottom: 2px solid #424242;
}
.group {
  display: grid;
  align-items: center;
  padding: 6px 0 3px;
  height: 27px;
}
.group.three { height: 65px; }
.group.two { height: 46px; }
.rest { flex: 1; border: 0; }
.glyph-a {
  font: italic 15px/15px 'Liberation Serif', serif;
}

/* Paneles */
.panels {
  width: 202px;
  display: flex;
  flex-direction: column;
}
.panels .strip {
  padding-right: 5px;
}
.panels section {
  background: #535353;
}
.panel-tabs {
  display: flex;
  height: 19px;
  background: #434343;
  color: #aaa;
}
.panel-tabs button {
  padding: 0 6px;
}
.panel-tabs.narrow button {
  justify-content: start;
  width: 21px;
  padding: 0 0 0 6px;
}
.panel-tabs.narrow .active {
  width: 50px;
  padding-left: 5px;
}
.panel-tabs .active {
  background: #535353;
  color: #fff;
  font-weight: bold;
}
.burger {
  width: 7px;
  height: 5px;
  margin: 7px 4px 0 auto;
  background: repeating-linear-gradient(#aaa 0 1px, transparent 1px 2px);
}
.properties {
  height: 179px;
}
.kind {
  display: flex;
  align-items: center;
  gap: 5px;
  height: 23px;
  padding-left: 8px;
  border-bottom: 1px solid #484848;
}
.t.box {
  width: 14px;
  height: 14px;
  background: #3a3a3a;
  font-size: 12px;
  text-align: center;
}
.props {
  display: flex;
}
.prop-body {
  flex: 1;
}
.fold {
  display: flex;
  align-items: center;
  gap: 5px;
  height: 20px;
  padding-left: 5px;
  color: #eee;
}
.fold.line {
  border-bottom: 1px solid #484848;
}
.reset {
  margin-left: auto;
  margin-right: 37px;
}
.chars {
  display: grid;
  gap: 4px;
  padding: 0 38px 0 7px;
}
.field.short {
  margin-right: 18px;
}
.pair {
  display: grid;
  grid-template-columns: 15px 40px 1fr 40px;
  row-gap: 4px;
  margin-top: 3px;
}
.pair .tt {
  width: 12px;
}
.sym {
  font-size: 8px;
  line-height: 12px;
}
.pair .lead, .pair .inv {
  justify-self: end;
  margin-right: 4px;
}
.inv {
  height: 9px;
  padding: 0 1px;
  background: #eee;
  color: #444;
  font-weight: bold;
  line-height: 9px;
}
.color-label {
  grid-column: 1 / 4;
  margin-right: 4px;
  text-align: right;
}
.color {
  height: 11px;
  background: #000;
}
.prop-scroll {
  width: 10px;
  height: 118px;
  display: flex;
  flex-direction: column;
  align-items: center;
  padding-top: 5px;
  background: #4a4a4a;
}
.prop-scroll .thumb {
  width: 8px;
  height: 17px;
  margin: 2px 0 auto;
  background: #6e6e6e;
}
.layers {
  flex: 1;
  min-height: 0;
  display: flex;
  flex-direction: column;
  margin-top: 2px;
}
.bar {
  display: flex;
  align-items: center;
  height: 18px;
  padding: 0 17px 0 3px;
}
.bar.filter {
  height: 23px;
  padding-top: 3px;
  border-bottom: 1px solid #484848;
}
.bar label {
  display: flex;
  align-items: center;
  gap: 4px;
  margin-left: auto;
}
.field.tipo {
  width: 71px;
  height: 14px;
  padding-left: 4px;
  background: #424242;
  border-color: #424242;
}
.field.mode {
  width: 110px;
  padding-left: 3px;
  background: #424242;
  border-color: #424242;
}
.field.pct {
  width: 34px;
}
.icons {
  display: flex;
  align-items: center;
  gap: 7px;
  margin-left: 15px;
}
.icons .t {
  width: 9px;
  font-size: 11px;
  text-align: center;
}
.icons.lock {
  gap: 6px;
  margin-left: 5px;
}
.bloq {
  padding-left: 1px;
}
.toggle {
  width: 5px;
  height: 10px;
  margin: 0 2px 0 auto;
  border-radius: 3px;
  background: linear-gradient(#ddd 0 5px, #3a3a3a 5px);
}
.list {
  flex: 1;
  min-height: 0;
  margin-top: 1px;
  background: #4b4b4b;
}
.list ul {
  margin: 0 12px 0 1px;
  padding: 0;
  list-style: none;
  background: #535353;
}
.list li {
  border-bottom: 1px solid #484848;
}
.row {
  display: flex;
  align-items: center;
  height: 26px;
}
.eye {
  width: 9px;
  height: 9px;
  margin: 1px 5px 0;
}
.cell {
  flex: 1;
  display: flex;
  align-items: center;
  gap: 6px;
  height: 26px;
  padding: 0 1px 0 3px;
  border-left: 1px solid #484848;
}
.cell.sel {
  background: #6a6a6a;
}
.tbox {
  width: 23px;
  font-weight: normal;
  font-size: 15px;
  line-height: 23px;
  text-align: center;
  margin: 0 -1px;
}
.sel .tbox {
  border: 1px solid #fff;
  background: #535353;
}
.cell i {
  margin-left: auto;
  font: italic bold 11px/11px 'Liberation Serif', serif;
}
.thumbnail {
  width: 13px;
  height: 20px;
  display: flex;
  align-items: end;
  justify-content: end;
  background: repeating-conic-gradient(#ccc 0 25%, #fff 0 50%) 0 0 / 6px 6px;
}
.thumbnail svg {
  background: #444;
}
.photo {
  border: 1px solid #fff;
  background: linear-gradient(100deg, #fff 8%, #1c1c1c 14%, #555 50%, #1c1c1c 86%, #fff 92%);
}
.cell.hue {
  gap: 4px;
  padding-left: 6px;
}
.white {
  width: 12px;
  height: 20px;
  margin: 0 3px 0 -1px;
  background: #fff;
}
.effect {
  display: flex;
  align-items: center;
  gap: 4px;
  height: 13px;
  padding-left: 33px;
}
.effect svg, .no-eye {
  width: 8px;
  height: 8px;
}
.effect.deep {
  padding-left: 44px;
}
.layer-actions {
  display: flex;
  align-items: center;
  justify-content: flex-end;
  gap: 9px;
  height: 17px;
  padding-right: 18px;
  border-top: 1px solid #424242;
}
.layer-actions i {
  font: italic bold 10px/10px 'Liberation Serif', serif;
}

/* Barra de tareas */
.taskbar {
  position: relative;
  display: flex;
  align-items: center;
  justify-content: center;
  height: 32px;
  background: #1c1c1c;
}
.apps {
  display: grid;
  grid-template-columns: repeat(8, 1fr);
  width: 235px;
  height: 26px;
}
.apps button {
  position: relative;
  margin: 0 1px;
  border-radius: 3px;
}
.apps svg {
  width: 16px;
  height: 16px;
}
.apps .ps-logo {
  width: 14px;
  height: 14px;
  font-size: 8px;
  line-height: 14px;
}
.apps .current-app {
  background: #2b2b2b;
}
.open::after, .current-app::after {
  content: '';
  position: absolute;
  bottom: -1px;
  width: 4px;
  height: 2px;
  border-radius: 1px;
  background: #999;
}
.current-app::after {
  width: 11px;
  background: #c9a0dc;
}
.wps {
  width: 15px;
  height: 16px;
  border-radius: 2px;
  background: #e4102c;
  color: #fff;
  font-size: 12px;
  font-weight: bold;
  line-height: 16px;
}
.fp {
  color: #fff;
  font: italic bold 12px/12px 'Liberation Sans', sans-serif;
}
.fp b {
  color: #7a3ee8;
}
.rec {
  position: absolute;
  top: 3px;
  right: 4px;
  width: 8px;
  height: 8px;
  border-radius: 50%;
  background: #e80000;
}
.tray {
  position: absolute;
  right: 13px;
  display: flex;
  align-items: center;
  gap: 9px;
  color: #eee;
}
.tray .net {
  margin-right: -4px;
}
.clock {
  display: grid;
  width: 39px;
  font-size: 8px;
  text-align: right;
}

/* Meta de seguidores */
.goal {
  position: absolute;
  top: 23px;
  left: 50%;
  width: 496px;
  height: 35px;
  display: flex;
  justify-content: space-between;
  align-items: center;
  padding: 0 8px;
  border: 2px solid #fff;
  border-radius: 18px;
  overflow: hidden;
  background: linear-gradient(#404040, #2c2c2c);
  color: #fff;
  font: bold 18px/20px 'Liberation Sans', Arial, sans-serif;
  text-shadow: 1px 1px 2px #333;
  transform: translateX(-50%);
}
.goal-fill {
  position: absolute;
  top: 0;
  left: 0;
  height: 100%;
  border-radius: 0 16px 16px 0;
  background: repeating-linear-gradient(135deg, #5cfb0a 0 20px, #86fd4c 20px 39px);
}
.goal span {
  position: relative;
  flex: 1;
}
.goal span:nth-child(3) { text-align: center; }
.goal span:nth-child(4) { text-align: right; }
```
